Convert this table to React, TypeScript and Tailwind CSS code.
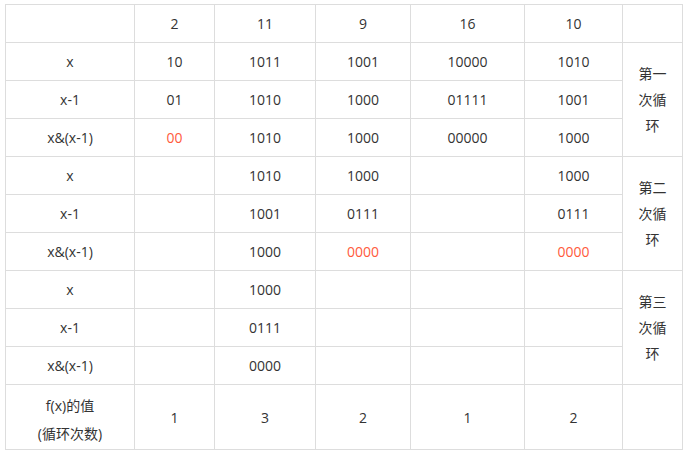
const header = ['', '2', '11', '9', '16', '10'];

type Cell = { v: string; red?: boolean };
const c = (v: string, red = false): Cell => ({ v, red });

const groups: { label: string; rows: Cell[][] }[] = [
  {
    label: '第一次循环',
    rows: [
      [c('x'), c('10'), c('1011'), c('1001'), c('10000'), c('1010')],
      [c('x-1'), c('01'), c('1010'), c('1000'), c('01111'), c('1001')],
      [c('x&(x-1)'), c('00', true), c('1010'), c('1000'), c('00000'), c('1000')],
    ],
  },
  {
    label: '第二次循环',
    rows: [
      [c('x'), c(''), c('1010'), c('1000'), c(''), c('1000')],
      [c('x-1'), c(''), c('1001'), c('0111'), c(''), c('0111')],
      [c('x&(x-1)'), c(''), c('1000'), c('0000', true), c(''), c('0000', true)],
    ],
  },
  {
    label: '第三次循环',
    rows: [
      [c('x'), c(''), c('1000'), c(''), c(''), c('')],
      [c('x-1'), c(''), c('0111'), c(''), c(''), c('')],
      [c('x&(x-1)'), c(''), c('0000'), c(''), c(''), c('')],
    ],
  },
];

const td = 'border border-[#dddddd] text-center align-middle p-0';

export default function App() {
  return (
    <div
      className="w-[699px] h-[459px] bg-white pl-[5px] pt-[4px] text-[14px] text-[#333333]"
      style={{ fontFamily: '"Open Sans", "Noto Sans CJK SC", sans-serif' }}
    >
      <table className="table-fixed border-collapse w-[677px]">
        <colgroup>
          <col className="w-[129px]" />
          <col className="w-[80px]" />
          <col className="w-[101px]" />
          <col className="w-[95px]" />
          <col className="w-[114px]" />
          <col className="w-[98px]" />
          <col className="w-[60px]" />
        </colgroup>
        <tbody>
          <tr className="h-[38px]">
            {header.map((h, i) => (
              <td key={i} className={td}>{h}</td>
            ))}
            <td className={td}></td>
          </tr>
          {groups.map((g) =>
            g.rows.map((row, ri) => (
              <tr key={g.label + ri} className="h-[38px]">
                {row.map((cell, ci) => (
                  <td key={ci} className={`${td} ${cell.red ? 'text-[#ff5a3c]' : ''}`}>
                    {cell.v}
                  </td>
                ))}
                {ri === 0 && (
                  <td rowSpan={3} className={`${td} px-[10px] leading-[26px]`}>
                    {g.label}
                  </td>
                )}
              </tr>
            ))
          )}
          <tr className="h-[65px]">
            <td className={`${td} leading-[28px] pt-[5px]`}>
              f(x)的值
              <br />
              (循环次数)
            </td>
            <td className={td}>1</td>
            <td className={td}>3</td>
            <td className={td}>2</td>
            <td className={td}>1</td>
            <td className={td}>2</td>
            <td className={td}></td>
          </tr>
        </tbody>
      </table>
    </div>
  );
}
